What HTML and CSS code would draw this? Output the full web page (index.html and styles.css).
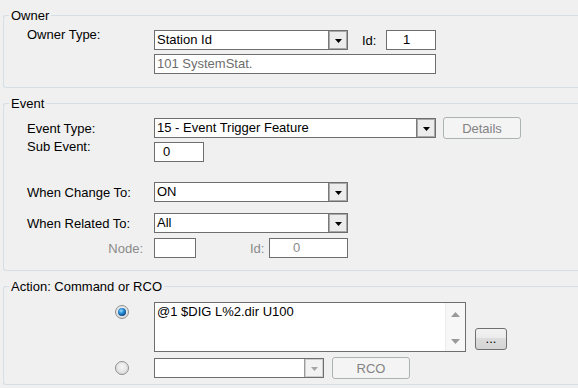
FILE: index.html
```html
<!DOCTYPE html>
<html lang="en">
<head>
    <meta charset="UTF-8">
    <meta name="viewport" content="width=device-width, initial-scale=1.0">
    <title>Event Trigger</title>
    <link rel="stylesheet" href="styles.css">
</head>
<body>

    <fieldset class="group group-owner">
        <legend>Owner</legend>
        <div class="group-body pad-owner">
            <div class="row">
                <span class="lbl lbl-top">Owner Type:</span>
                <div class="combo combo-short">
                    <span class="combo-text">Station Id</span>
                    <span class="combo-btn"><svg width="7" height="4" viewBox="0 0 7 4"><path d="M0 0h7L3.5 4z" fill="#000"/></svg></span>
                </div>
                <span class="lbl-id">Id:</span>
                <div class="field field-id">1</div>
            </div>
            <div class="row row-owner2">
                <span class="lbl"></span>
                <div class="field field-long muted">101 SystemStat.</div>
            </div>
        </div>
    </fieldset>

    <fieldset class="group group-event">
        <legend>Event</legend>
        <div class="group-body pad-event">
            <div class="row row-tall">
                <span class="lbl">Event Type:</span>
                <div class="combo combo-long">
                    <span class="combo-text">15 - Event Trigger Feature</span>
                    <span class="combo-btn"><svg width="7" height="4" viewBox="0 0 7 4"><path d="M0 0h7L3.5 4z" fill="#000"/></svg></span>
                </div>
                <button class="btn btn-off btn-details">Details</button>
            </div>
            <div class="row row-sub">
                <span class="lbl lbl-top">Sub Event:</span>
                <div class="field field-sub">0</div>
            </div>
            <div class="row row-change">
                <span class="lbl">When Change To:</span>
                <div class="combo combo-short">
                    <span class="combo-text">ON</span>
                    <span class="combo-btn"><svg width="7" height="4" viewBox="0 0 7 4"><path d="M0 0h7L3.5 4z" fill="#000"/></svg></span>
                </div>
            </div>
            <div class="row row-related">
                <span class="lbl">When Related To:</span>
                <div class="combo combo-short">
                    <span class="combo-text">All</span>
                    <span class="combo-btn"><svg width="7" height="4" viewBox="0 0 7 4"><path d="M0 0h7L3.5 4z" fill="#000"/></svg></span>
                </div>
            </div>
            <div class="row row-node">
                <span class="lbl lbl-right muted">Node:</span>
                <div class="field field-node"></div>
                <span class="lbl-nodeid muted">Id:</span>
                <div class="field field-nodeid muted">0</div>
            </div>
        </div>
    </fieldset>

    <fieldset class="group group-action">
        <legend>Action: Command or RCO</legend>
        <div class="group-body pad-action">
            <div class="row row-cmd">
                <span class="radio radio-on"></span>
                <div class="memo">
                    <span class="memo-text">@1 $DIG L%2.dir U100</span>
                    <div class="scroll">
                        <svg width="9" height="5" viewBox="0 0 9 5"><path d="M0 5h9L4.5 0z" fill="#9a9a9a"/></svg>
                        <svg width="9" height="5" viewBox="0 0 9 5"><path d="M0 0h9L4.5 5z" fill="#9a9a9a"/></svg>
                    </div>
                </div>
                <button class="btn btn-more">...</button>
            </div>
            <div class="row row-rco">
                <span class="radio"></span>
                <div class="combo combo-rco">
                    <span class="combo-text"></span>
                    <span class="combo-btn combo-btn-off"><svg width="7" height="4" viewBox="0 0 7 4"><path d="M0 0h7L3.5 4z" fill="#a6a6a6"/></svg></span>
                </div>
                <button class="btn btn-off btn-rco">RCO</button>
            </div>
        </div>
    </fieldset>

</body>
</html>
```

FILE: styles.css
```css
body {
    margin: 0;
    padding: 0;
    background-color: #f0f0f0;
    font-family: "Liberation Sans", Arial, sans-serif;
    font-size: 13px;
    line-height: 15px;
    color: #000;
    overflow: hidden;
}

/* group boxes run off the right edge of the window, so no right border */
.group {
    box-sizing: border-box;
    width: 575px;
    margin: 8px 0 0 3px;
    padding: 0;
    border: 1px solid #d5dfe5;
    border-right: 0;
    border-radius: 3px 0 0 3px;
}

.group legend {
    margin-left: 5px;
    padding: 0 2px;
    line-height: 15px;
}

.group-owner {
    height: 80px;
}

.group-event {
    height: 175px;
}

.group-action {
    height: 106px;
}

.group-body {
    padding-left: 23px;
}

.pad-owner {
    padding-top: 7px;
}

.pad-event {
    padding-top: 6px;
}

.pad-action {
    padding-top: 8px;
}

.row {
    display: flex;
    align-items: center;
    height: 20px;
}

.row-tall {
    height: 22px;
}

.row-owner2 {
    margin-top: 4px;
}

.row-sub {
    margin-top: 3px;
}

.row-change {
    margin-top: 20px;
}

.row-related {
    margin-top: 11px;
}

.row-node {
    margin-top: 5px;
}

.lbl {
    flex: none;
    width: 127px;
}

.lbl-top {
    align-self: flex-start;
    margin-top: -3px;
}

.lbl-right {
    box-sizing: border-box;
    text-align: right;
    padding-right: 11px;
}

.muted {
    color: #8a8a8a;
}

.field.muted {
    color: #6d6d6d;
}

.field-nodeid.muted {
    color: #8a8a8a;
}

/* text boxes */
.field {
    box-sizing: border-box;
    height: 20px;
    border: 1px solid #6e6e6e;
    background-color: #fff;
    padding: 0 2px 1px;
    display: flex;
    align-items: center;
    flex: none;
}

.field-id {
    width: 50px;
    padding-left: 16px;
}

.field-long {
    width: 282px;
}

.field-sub {
    width: 50px;
    padding-left: 8px;
}

.field-node {
    width: 42px;
}

.field-nodeid {
    width: 79px;
    padding-left: 23px;
}

.lbl-id {
    margin-left: 14px;
    width: 24px;
}

.lbl-nodeid {
    margin-left: 54px;
    width: 19px;
}

/* combo boxes */
.combo {
    box-sizing: border-box;
    height: 20px;
    border: 1px solid #6e6e6e;
    background-color: #fff;
    display: flex;
    flex: none;
}

.combo-short {
    width: 194px;
}

.combo-long {
    width: 282px;
}

.combo-rco {
    width: 170px;
}

.combo-text {
    flex: 1;
    padding: 0 2px 1px;
    display: flex;
    align-items: center;
    white-space: nowrap;
    overflow: hidden;
}

.combo-btn {
    box-sizing: border-box;
    width: 19px;
    border-left: 1px solid #7b7b7b;
    box-shadow: inset 1px 1px 0 #a8a8a8, inset -1px -1px 0 #a8a8a8;
    background-color: #ececec;
    display: flex;
    align-items: center;
    justify-content: center;
    padding-top: 1px;
}

.combo-btn-off {
    border-left-color: #9a9a9a;
    box-shadow: inset 1px 1px 0 #cfcfcf, inset -1px -1px 0 #cfcfcf;
    background-color: #f2f2f2;
}

/* buttons */
.btn {
    box-sizing: border-box;
    height: 22px;
    font-family: "Liberation Sans", Arial, sans-serif;
    font-size: 13px;
    border-radius: 3px;
    padding: 0;
    flex: none;
}

.btn-off {
    border: 1px solid #adb2b5;
    background-color: #f4f4f4;
    color: #838383;
    width: 78px;
}

.btn-details {
    margin-left: 7px;
}

.btn-rco {
    margin-left: 8px;
}

.btn-more {
    width: 32px;
    margin-left: 9px;
    margin-bottom: 2px;
    align-self: flex-end;
    border: 1px solid #707070;
    background: linear-gradient(#f2f2f2 0, #ebebeb 45%, #dddddd 46%, #d4d4d4 100%);
    color: #000;
    line-height: 18px;
}

/* action rows */
.row-cmd {
    height: 50px;
    align-items: flex-start;
}

.row-rco {
    margin-top: 5px;
    height: 22px;
}

.radio {
    box-sizing: border-box;
    flex: none;
    width: 14px;
    height: 14px;
    margin-left: 88px;
    margin-right: 25px;
    border: 1px solid #8e8f8f;
    border-radius: 50%;
    background: radial-gradient(circle at 50% 40%, #f6f6f6 0, #e4e4e4 55%, #cfcfcf 100%);
    display: flex;
    align-items: center;
    justify-content: center;
}

.row-cmd .radio {
    margin-top: 3px;
}

.radio-on::after {
    content: "";
    width: 8px;
    height: 8px;
    border-radius: 50%;
    background: radial-gradient(circle at 40% 35%, #9fe0ff 0, #2a8fd6 35%, #0d4f93 70%, #0a2c5a 100%);
}

.memo {
    box-sizing: border-box;
    width: 312px;
    height: 50px;
    border: 1px solid #6e6e6e;
    background-color: #fff;
    display: flex;
}

.memo-text {
    flex: 1;
    padding: 1px 2px 0;
    white-space: nowrap;
}

.scroll {
    width: 19px;
    background-color: #f7f7f7;
    border-left: 1px solid #ececec;
    display: flex;
    flex-direction: column;
    align-items: center;
    justify-content: space-between;
    padding: 9px 0 7px;
}
```
